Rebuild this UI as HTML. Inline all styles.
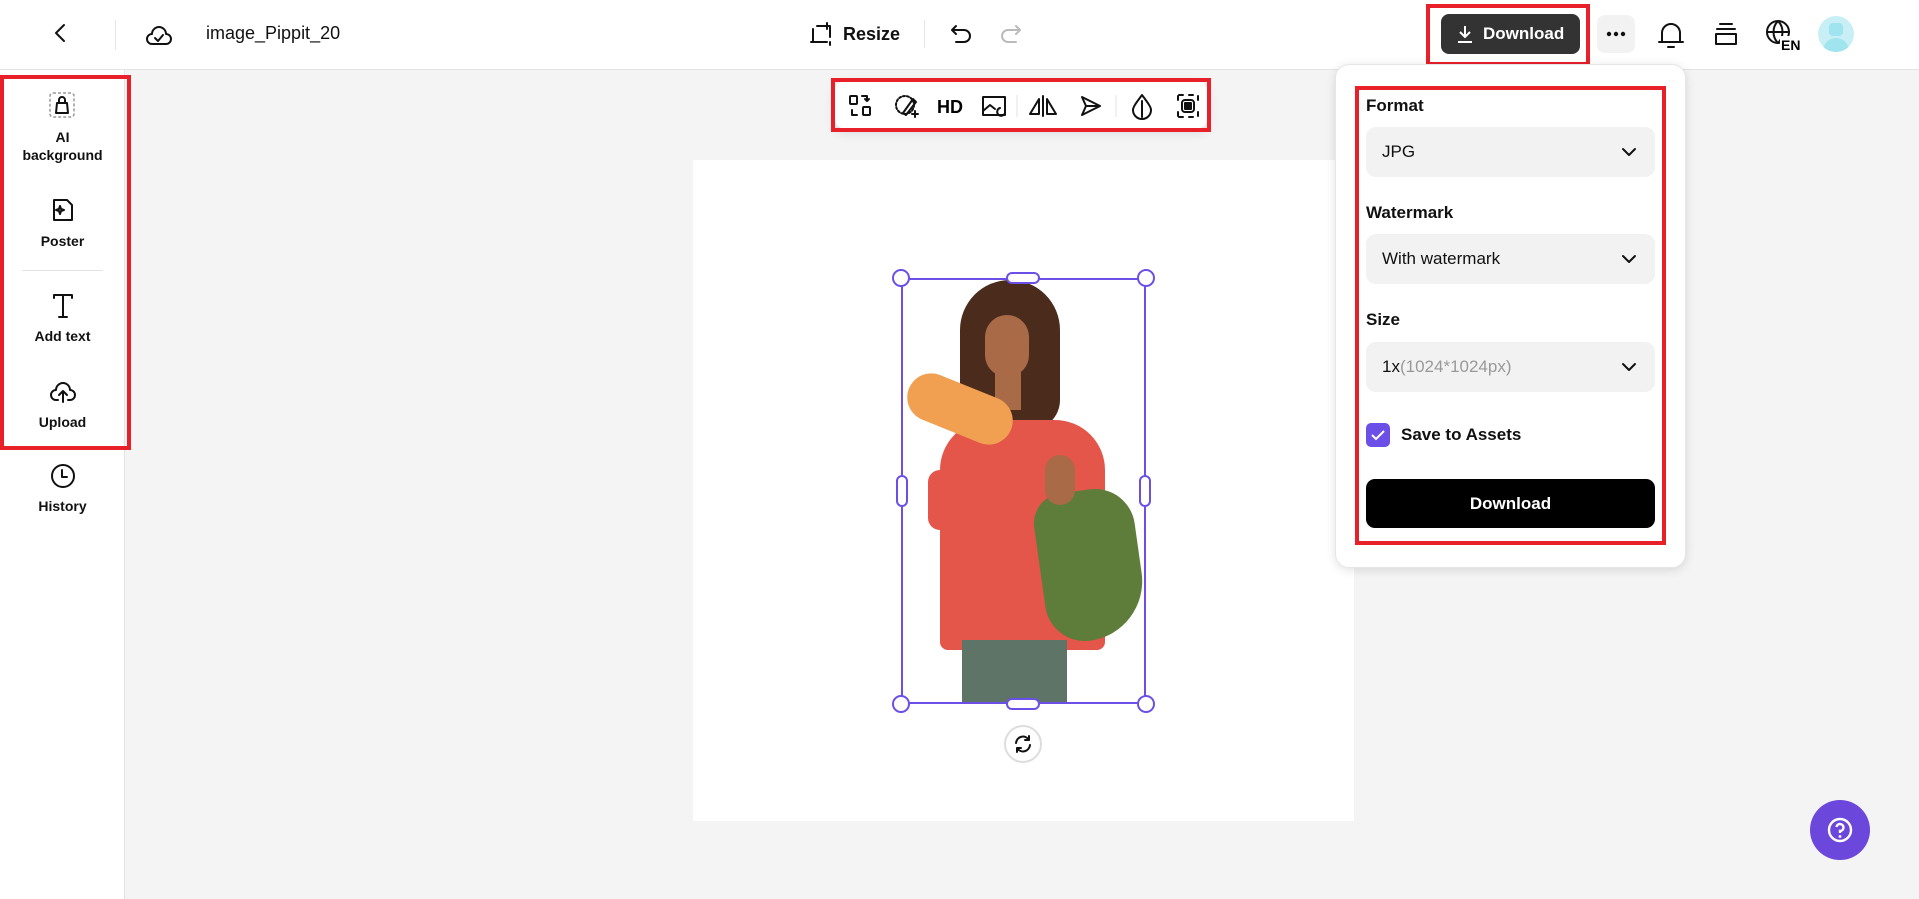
<!DOCTYPE html>
<html><head><meta charset="utf-8"><style>
*{box-sizing:border-box;margin:0;padding:0}
body{width:1919px;height:899px;overflow:hidden;background:#f4f4f4;font-family:"Liberation Sans",sans-serif;color:#111;position:relative}
.abs{position:absolute}
.hdr{left:0;top:0;width:1919px;height:70px;background:#fff;border-bottom:1px solid #e3e3e3}
.side{left:0;top:70px;width:125px;height:829px;background:#fff;border-right:1px solid #e3e3e3}
.red{border:4px solid #e8202a}
.lbl{width:125px;text-align:center;font-size:14px;font-weight:bold;line-height:18px}
.ic{stroke:#111;fill:none;stroke-width:2;stroke-linecap:round;stroke-linejoin:round}
.sel{background:#f2f2f2;border-radius:10px;height:50px;left:1366px;width:289px;font-size:17px;padding-left:16px;line-height:50px}
.chev{position:absolute;right:18px;top:19px}
.flab{left:1366px;font-size:17px;font-weight:bold}
.h{width:18px;height:18px;border:2px solid #6b4fe6;background:#fff;border-radius:50%}
</style></head><body>
<div class="abs hdr"></div>
<svg class="abs" style="left:50px;top:22px" width="22" height="22" viewBox="0 0 22 22"><path class="ic" d="M14 3 L6 11 L14 19" stroke-width="2.4"/></svg>
<div class="abs" style="left:115px;top:20px;width:1px;height:30px;background:#e6e6e6"></div>
<svg class="abs" style="left:144px;top:20px" width="30" height="30" viewBox="0 0 30 30"><path class="ic" d="M8 24 H22 A5 5 0 0 0 22 14 A7 7 0 0 0 8 14 A5 5 0 0 0 8 24 Z"/><path class="ic" d="M11 18 L14 21 L19 15"/></svg>
<div class="abs" style="left:206px;top:23px;font-size:18px">image_Pippit_20</div>
<svg class="abs" style="left:809px;top:21px" width="26" height="26" viewBox="0 0 26 26"><path class="ic" d="M4 8 V21 H18 M8 5 H21 V16 M18 2 V8 M4 21 H2 M21 24 V21"/></svg>
<div class="abs" style="left:843px;top:24px;font-size:18px;font-weight:bold">Resize</div>
<div class="abs" style="left:924px;top:20px;width:1px;height:28px;background:#e6e6e6"></div>
<svg class="abs" style="left:948px;top:21px" width="26" height="26" viewBox="0 0 26 26"><path class="ic" d="M8 5 L4 9 L8 13 M4 9 H16 A5 5 0 0 1 16 21 H8"/></svg>
<svg class="abs" style="left:998px;top:21px" width="26" height="26" viewBox="0 0 26 26"><path class="ic" style="stroke:#bbb" d="M18 5 L22 9 L18 13 M22 9 H10 A5 5 0 0 0 10 21 H18"/></svg>
<div class="abs red" style="left:1426px;top:4px;width:164px;height:62px"></div>
<div class="abs" style="left:1441px;top:14px;width:139px;height:40px;background:#333;border-radius:8px;color:#fff;font-size:17px;font-weight:bold;line-height:40px;padding-left:42px">Download</div>
<svg class="abs" style="left:1456px;top:24px" width="18" height="20" viewBox="0 0 18 20"><path d="M9 2 V13 M4 8 L9 13 L14 8 M2 18 H16" stroke="#fff" stroke-width="2" fill="none"/></svg>
<div class="abs" style="left:1597px;top:15px;width:38px;height:38px;background:#f2f2f2;border-radius:8px"></div>
<svg class="abs" style="left:1597px;top:15px" width="38" height="38" viewBox="0 0 38 38"><circle cx="12" cy="19" r="2.2" fill="#111"/><circle cx="19" cy="19" r="2.2" fill="#111"/><circle cx="26" cy="19" r="2.2" fill="#111"/></svg>
<svg class="abs" style="left:1656px;top:19px" width="30" height="32" viewBox="0 0 30 32"><path class="ic" d="M6 23 V14 A9 9 0 0 1 24 14 V23 H6 Z M3 23 H27 M12 28 H18"/></svg>
<svg class="abs" style="left:1712px;top:20px" width="28" height="30" viewBox="0 0 28 30"><path class="ic" d="M8 4 H20 M5 9 H23 M4 14 H24 V24 H4 Z" stroke-width="2.4"/></svg>
<svg class="abs" style="left:1764px;top:18px" width="36" height="34" viewBox="0 0 36 34"><circle class="ic" cx="14" cy="14" r="11" stroke-width="2.4"/><path class="ic" d="M3 14 H25 M14 3 C8 9 8 19 14 25 M14 3 C20 9 20 19 14 25" stroke-width="2.4"/><rect x="16" y="18" width="20" height="16" fill="#fff"/><text x="17" y="32" font-size="14" font-weight="bold" font-family="Liberation Sans">EN</text></svg>
<div class="abs" style="left:1818px;top:16px;width:36px;height:36px;border-radius:50%;background:#c8eff5;overflow:hidden"><div style="position:absolute;left:11px;top:7px;width:14px;height:13px;background:#9fe4ee;border-radius:4px"></div><div style="position:absolute;left:5px;top:22px;width:26px;height:20px;background:#9fe4ee;border-radius:13px 13px 0 0"></div></div>

<div class="abs side"></div>
<div class="abs red" style="left:0;top:75px;width:131px;height:375px"></div>
<svg class="abs" style="left:48px;top:91px" width="28" height="28" viewBox="0 0 28 28"><rect x="2" y="2" width="24" height="24" rx="3" stroke="#999" stroke-dasharray="3 2" fill="none" stroke-width="1.5"/><path class="ic" d="M8 22 L9 12 H19 L20 22 Z M11 12 V9 A3 3 0 0 1 17 9 V12"/></svg>
<div class="abs lbl" style="top:128px">AI<br>background</div>
<svg class="abs" style="left:50px;top:197px" width="26" height="26" viewBox="0 0 26 26"><path class="ic" d="M4 3 H17 L22 8 V23 H4 Z M10 9 L11 12 L14 13 L11 14 L10 17 L9 14 L6 13 L9 12 Z"/></svg>
<div class="abs lbl" style="top:232px">Poster</div>
<div class="abs" style="left:22px;top:270px;width:81px;height:1px;background:#e3e3e3"></div>
<svg class="abs" style="left:50px;top:292px" width="26" height="28" viewBox="0 0 26 28"><path class="ic" d="M4 6 V3 H22 V6 M13 3 V25 M9 25 H17"/></svg>
<div class="abs lbl" style="top:327px">Add text</div>
<svg class="abs" style="left:48px;top:376px" width="30" height="28" viewBox="0 0 30 28"><path class="ic" d="M10 24 H8 A5 5 0 0 1 8 14 A7 7 0 0 1 22 14 A5 5 0 0 1 22 24 H20 M15 26 V15 M11 19 L15 15 L19 19"/></svg>
<div class="abs lbl" style="top:413px">Upload</div>
<svg class="abs" style="left:49px;top:462px" width="28" height="28" viewBox="0 0 28 28"><circle class="ic" cx="14" cy="14" r="11" stroke-width="2.4"/><path class="ic" d="M13 8 V15 H18"/></svg>
<div class="abs lbl" style="top:497px">History</div>

<div class="abs" style="left:693px;top:160px;width:661px;height:661px;background:#fff"></div>
<div class="abs" style="left:835px;top:82px;width:372px;height:46px;background:#fff;border-radius:8px;box-shadow:0 4px 12px rgba(0,0,0,.12)"></div>
<div class="abs red" style="left:831px;top:78px;width:380px;height:54px"></div>
<svg class="abs" style="left:845px;top:91px" width="360" height="30" viewBox="0 0 360 30">
<g class="ic" stroke-width="2.2">
<rect x="5" y="5" width="7" height="8" rx="1"/><rect x="18" y="16" width="7" height="8" rx="1"/><path d="M17 5 H22 V10 M20 8 L22 10 L24 8 M12 24 H7 V19"/>
<circle cx="60" cy="14" r="9" stroke-dasharray="2 2"/><path d="M58 22 L68 8 L71 11 L61 24 Z M70 20 V26 M67 23 H73"/>
<path d="M138 6 H160 V24 H138 Z M138 20 L145 14 L150 18 M155 17 A4 4 0 1 0 160 22"/>
<path d="M198 5 V25 M194 23 L194 8 L185 23 Z M202 8 L211 23 H202 Z"/>
<path d="M237 6 L255 15 L237 24 L241 15 Z M241 15 H255"/>
<path d="M297 4 C291 12 288 16 288 19 A9 9 0 0 0 306 19 C306 16 303 12 297 4 Z M297 10 V26"/>
<path d="M334 4 H338 M344 4 H348 M334 26 H338 M344 26 H348 M333 5 V9 M333 21 V25 M353 5 V9 M353 21 V25"/><rect x="337" y="9" width="12" height="12" rx="3"/><rect x="340" y="12" width="6" height="6" fill="#111"/>
</g>
<text x="92" y="22" font-size="18" font-weight="bold" font-family="Liberation Sans">HD</text>
<line x1="172" y1="4" x2="172" y2="26" stroke="#e3e3e3"/><line x1="271" y1="4" x2="271" y2="26" stroke="#e3e3e3"/>
</svg>

<!-- person approximation -->
<div class="abs" style="left:960px;top:280px;width:100px;height:150px;background:#4a2b1c;border-radius:50px 50px 30px 30px"></div>
<div class="abs" style="left:985px;top:315px;width:44px;height:62px;background:#a96a48;border-radius:22px"></div>
<div class="abs" style="left:995px;top:370px;width:26px;height:40px;background:#a96a48"></div>
<div class="abs" style="left:940px;top:420px;width:165px;height:230px;background:#e4554a;border-radius:50px 50px 8px 8px"></div>
<div class="abs" style="left:928px;top:470px;width:30px;height:60px;background:#e4554a;border-radius:12px"></div>
<div class="abs" style="left:962px;top:640px;width:105px;height:64px;background:#5e7466"></div>
<div class="abs" style="left:905px;top:385px;width:110px;height:48px;background:#f0a050;border-radius:24px;transform:rotate(22deg)"></div>
<div class="abs" style="left:1040px;top:490px;width:100px;height:150px;background:#5e7d3a;border-radius:30px 40px 60px 40px;transform:rotate(-8deg)"></div>
<div class="abs" style="left:1045px;top:455px;width:30px;height:50px;background:#a96a48;border-radius:15px"></div>

<div class="abs" style="left:901px;top:278px;width:245px;height:426px;border:2px solid #6b4fe6"></div>
<div class="abs h" style="left:892px;top:269px"></div><div class="abs h" style="left:1137px;top:269px"></div>
<div class="abs h" style="left:892px;top:695px"></div><div class="abs h" style="left:1137px;top:695px"></div>
<div class="abs h" style="left:1006px;top:272px;width:34px;height:12px;border-radius:6px"></div>
<div class="abs h" style="left:1006px;top:698px;width:34px;height:12px;border-radius:6px"></div>
<div class="abs h" style="left:896px;top:475px;width:12px;height:32px;border-radius:6px"></div>
<div class="abs h" style="left:1139px;top:475px;width:12px;height:32px;border-radius:6px"></div>
<div class="abs" style="left:1004px;top:725px;width:38px;height:38px;border-radius:50%;background:#fff;border:2px solid #ddd"></div>
<svg class="abs" style="left:1012px;top:733px" width="22" height="22" viewBox="0 0 22 22"><path class="ic" d="M4 10 A7 7 0 0 1 17 7 M18 12 A7 7 0 0 1 5 15 M17 3 V7 H13 M5 19 V15 H9"/></svg>

<div class="abs" style="left:1335px;top:64px;width:351px;height:504px;background:#fff;border-radius:14px;box-shadow:0 2px 10px rgba(0,0,0,.12);border:1px solid #e6e6e6"></div>
<div class="abs red" style="left:1355px;top:86px;width:311px;height:459px"></div>
<div class="abs flab" style="top:96px">Format</div>
<div class="abs sel" style="top:127px">JPG<svg class="chev" width="16" height="12" viewBox="0 0 16 12"><path class="ic" d="M2 3 L8 9 L14 3"/></svg></div>
<div class="abs flab" style="top:203px">Watermark</div>
<div class="abs sel" style="top:234px">With watermark<svg class="chev" width="16" height="12" viewBox="0 0 16 12"><path class="ic" d="M2 3 L8 9 L14 3"/></svg></div>
<div class="abs flab" style="top:310px">Size</div>
<div class="abs sel" style="top:342px">1x<span style="color:#999">(1024*1024px)</span><svg class="chev" width="16" height="12" viewBox="0 0 16 12"><path class="ic" d="M2 3 L8 9 L14 3"/></svg></div>
<div class="abs" style="left:1366px;top:423px;width:24px;height:24px;border-radius:5px;background:#6b4fe6"></div>
<svg class="abs" style="left:1366px;top:423px" width="24" height="24" viewBox="0 0 24 24"><path d="M6 12 L10 16 L18 8" stroke="#fff" stroke-width="2" fill="none"/></svg>
<div class="abs" style="left:1401px;top:425px;font-size:17px;font-weight:bold">Save to Assets</div>
<div class="abs" style="left:1366px;top:479px;width:289px;height:49px;background:#000;border-radius:9px;color:#fff;font-size:17px;font-weight:bold;text-align:center;line-height:49px">Download</div>

<div class="abs" style="left:1810px;top:800px;width:60px;height:60px;border-radius:50%;background:#6b47dc"></div>
<svg class="abs" style="left:1826px;top:816px" width="28" height="28" viewBox="0 0 28 28"><circle cx="14" cy="14" r="11" stroke="#fff" stroke-width="2.4" fill="none"/><path d="M10.5 11 A3.5 3.5 0 1 1 14 15 V17" stroke="#fff" stroke-width="2.4" fill="none"/><circle cx="14" cy="20.5" r="1.4" fill="#fff"/></svg>
</body></html>
